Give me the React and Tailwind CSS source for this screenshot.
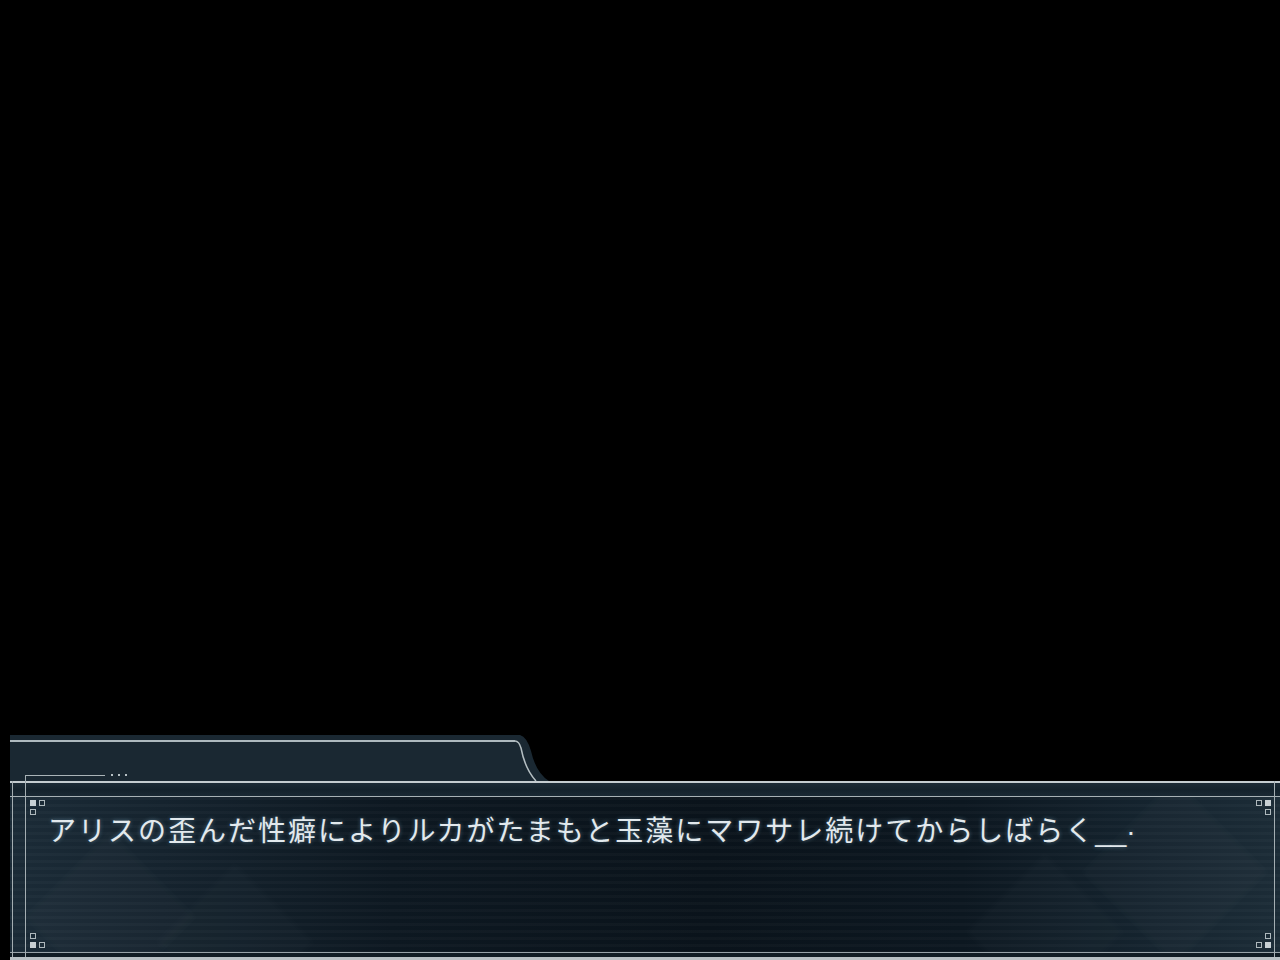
import React from "react";

function Dots() {
  return (
    <div className="flex items-center gap-[5px] ml-[6px]">
      <div className="w-[2px] h-[2px] bg-[#b6c0c4]" />
      <div className="w-[2px] h-[2px] bg-[#b6c0c4]" />
      <div className="w-[2px] h-[2px] bg-[#b6c0c4]" />
    </div>
  );
}

function Sq({ filled }) {
  return filled ? (
    <div className="w-[6px] h-[6px] bg-[#c8d0d4]" />
  ) : (
    <div className="w-[6px] h-[6px] border border-[#aeb8bc]" />
  );
}

export default function App() {
  return (
    <div
      className="w-[1280px] h-[960px] bg-black flex flex-col justify-end overflow-hidden relative"
      style={{ fontFamily: '"Noto Sans CJK JP", "Noto Sans", sans-serif' }}
    >
      {/* tab row */}
      <div className="flex h-[46px] pl-[10px]">
        <div className="w-[505px] bg-[#1a2832] pt-[5px] flex flex-col">
          <div className="h-[2px] bg-[#aeb9be]" />
          <div className="flex-1" />
          <div className="flex items-center pl-[15px] mb-[5px]">
            <div className="w-[80px] h-[1px] bg-[#aab4b8]" />
            <Dots />
          </div>
        </div>
        <svg width="42" height="46" viewBox="0 0 42 46" className="block">
          <path d="M0 0 L5 0 Q12 2 16 16 Q21 38 34 46 L0 46 Z" fill="#1a2832" />
          <path d="M0 6 Q4 6 6 13 Q10 34 21 46" fill="none" stroke="#b4bec2" strokeWidth="1.5" />
        </svg>
      </div>

      {/* main box */}
      <div className="h-[179px] ml-[10px] flex flex-col bg-[#0e1922] relative">
        <div className="h-[2px] bg-[#c4ccd0]" />
        <div className="h-[13px] bg-[linear-gradient(180deg,#1c2b36_0%,#14222c_50%,#1a2934_100%)]" />
        <div className="h-[1px] bg-[#a8b2b6]" />
        <div className="flex-1 relative overflow-hidden bg-[linear-gradient(90deg,#1b2b37_0%,#15232e_12%,#0d1821_30%,#0a131b_55%,#0c1720_75%,#15242f_90%,#1c2c37_100%)]">
          {/* faint diamonds */}
          <div className="absolute left-[40px] top-[60px] w-[120px] h-[120px] rotate-45 bg-white/[0.015] blur-[2px]" />
          <div className="absolute left-[170px] top-[90px] w-[110px] h-[110px] rotate-45 bg-white/[0.012] blur-[2px]" />
          <div className="absolute right-[40px] top-[10px] w-[130px] h-[130px] rotate-45 bg-white/[0.015] blur-[2px]" />
          <div className="absolute right-[180px] top-[80px] w-[110px] h-[110px] rotate-45 bg-white/[0.01] blur-[2px]" />
          {/* scanlines */}
          <div className="absolute inset-0 bg-[repeating-linear-gradient(180deg,rgba(255,255,255,0.025)_0px,rgba(255,255,255,0.025)_3px,transparent_3px,transparent_7px)]" />

          {/* corner ornaments */}
          <div className="absolute left-[20px] top-[3px] flex flex-col gap-[3px]">
            <div className="flex gap-[3px]"><Sq filled /><Sq /></div>
            <Sq />
          </div>
          <div className="absolute left-[20px] bottom-[4px] flex flex-col gap-[3px]">
            <Sq />
            <div className="flex gap-[3px]"><Sq filled /><Sq /></div>
          </div>
          <div className="absolute right-[9px] top-[3px] flex flex-col items-end gap-[3px]">
            <div className="flex gap-[3px]"><Sq /><Sq filled /></div>
            <Sq />
          </div>
          <div className="absolute right-[9px] bottom-[4px] flex flex-col items-end gap-[3px]">
            <Sq />
            <div className="flex gap-[3px]"><Sq /><Sq filled /></div>
          </div>

          {/* text */}
          <div className="relative pl-[38px] pt-[14px] text-[28px] leading-[36px] tracking-[2px] text-[#e2e9ed] [text-shadow:0_0_4px_rgba(140,190,220,0.45)]">
            アリスの歪んだ性癖によりルカがたまもと玉藻にマワサレ続けてからしばらく
            <span className="tracking-[0px]" style={{ fontFamily: '"Liberation Sans", sans-serif' }}>__·</span>
          </div>
        </div>
        <div className="h-[1px] bg-[#98a2a8]" />
        <div className="h-[4px] bg-[#111c24]" />
        <div className="h-[3px] bg-[#b8c0c4]" />

        {/* vertical frame lines */}
        <div className="absolute left-[2px] top-0 bottom-[3px] w-[1px] bg-[#a4aeb2]" />
        <div className="absolute left-[15px] top-[-6px] bottom-[3px] w-[1px] bg-[#a4aeb2]" />
        <div className="absolute right-[5px] top-0 bottom-[3px] w-[1px] bg-[#a4aeb2]" />
      </div>
    </div>
  );
}
